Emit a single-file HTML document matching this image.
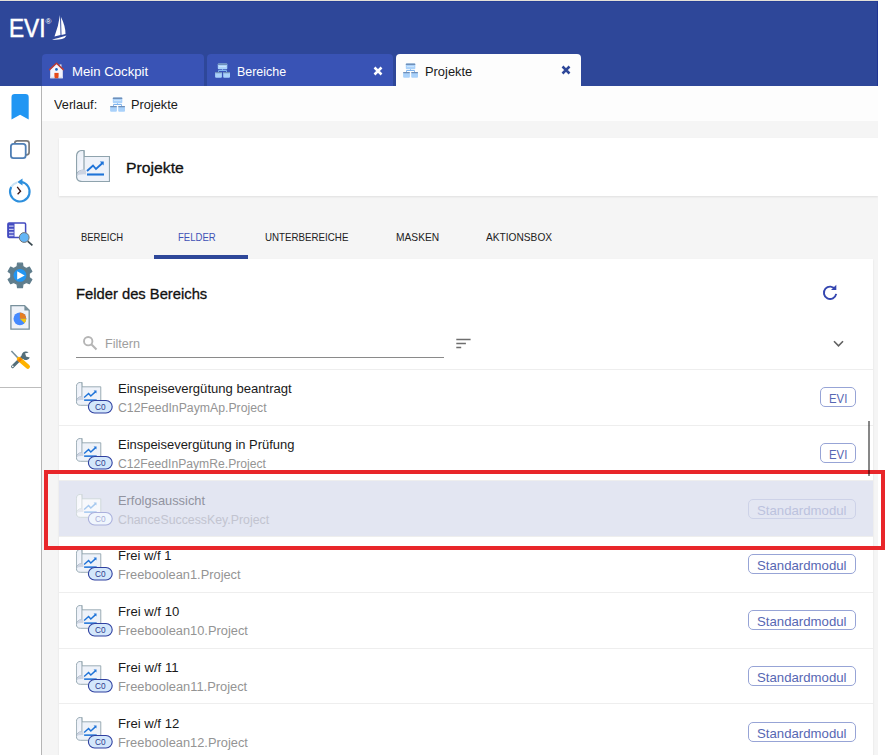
<!DOCTYPE html>
<html><head><meta charset="utf-8">
<style>
*{box-sizing:border-box;margin:0;padding:0}
html,body{width:886px;height:755px;overflow:hidden;background:#fff;font-family:"Liberation Sans",sans-serif;}
.abs{position:absolute}
.fo{transform-origin:0 50%}
#app{position:absolute;left:0;top:0;width:878px;height:755px;background:#f5f5f5;overflow:hidden}
#topline{position:absolute;left:0;top:0;width:878px;height:1px;background:#e3e0d8}
#hdr{position:absolute;left:0;top:1px;width:878px;height:85px;background:#2e4799;border-right:1px solid #1f3593;border-top:1px solid #263f95}
.tab{position:absolute;top:54px;height:32px;background:#3953b5;border-radius:4px 4px 0 0;color:#fff;font-size:13.4px}
.tab span.t{position:absolute;top:10px;white-space:nowrap;transform-origin:0 50%}
#side{position:absolute;left:0;top:86px;width:42px;height:669px;background:#fff;border-right:1px solid #b5b5b5}
#crumb{position:absolute;left:42px;top:86px;width:836px;height:35px;background:#fdfdfd}
.card{position:absolute;background:#fff;box-shadow:0 1px 2px rgba(0,0,0,.09)}
.stab{position:absolute;top:231px;font-size:11px;color:#212121;white-space:nowrap;transform-origin:0 50%}
.row{position:absolute;left:59px;width:814px;height:56px}
.sep{position:absolute;left:59px;width:814px;height:1px;background:#eeeeee}
.row .ti{position:absolute;left:59px;top:12px;font-size:13px;color:#1a1a1a;white-space:nowrap;transform-origin:0 50%}
.row .su{position:absolute;left:59px;top:32px;font-size:12.5px;color:#949494;white-space:nowrap;transform-origin:0 50%}
.row .ic{position:absolute;left:17px;top:13px;width:38px;height:32px}
.chip{position:absolute;right:17px;top:18px;height:20px;border:1px solid #97a4d6;border-radius:5px;color:#5767b3;font-size:13px;white-space:nowrap}
.chip .ct{position:absolute;top:3px;left:0;transform-origin:0 50%}
.row.sel .ti{color:#9193a0}
.row.sel .su{color:#c2c4d0}
.row.sel .chip{border-color:#cdd2e8;color:#bcc2de}
.row.sel .ic{--sf:#f7f8fc;--ss:#cdd6d8;--sr:#fafbfe;--sd:#e6e9f0;--sc:#a6c8ef}
</style></head><body>
<div id="app">
 <div id="topline"></div>
 <div id="hdr"></div>
 <!-- logo -->
 <div class="abs fo" style="left:9.06px;transform:scaleX(0.8704);top:13px;color:#fff;font-size:26px;white-space:nowrap;-webkit-text-stroke:.55px #fff">EVI</div>
 <div class="abs" style="left:45.5px;top:17px;color:#fff;font-size:8px;line-height:10px">®</div>
 <svg class="abs" style="left:51px;top:14px" width="17" height="28" viewBox="0 0 17 28">
  <path d="M9 1 L9.5 21 L3.5 22.5 Q7.5 12 9 1Z" fill="#fff"/>
  <path d="M10 3 Q14.5 12 14.5 20 L10.5 21Z" fill="#fff"/>
  <path d="M1 25.5 Q8 24 15.5 21.5 Q14 24.5 11 25 Q6 26.2 1 25.5Z" fill="#fff"/>
 </svg>

 <!-- tabs -->
 <div class="tab" style="left:42px;width:162px"><span class="t" style="left:30.42px;transform:scaleX(0.9847);">Mein Cockpit</span>
  <svg class="abs" style="left:7px;top:8px" width="15" height="17" viewBox="0 0 15 17">
   <path d="M1.2 7.4 L7.5 1.6 L13.8 7.4 V16.2 H1.2Z" fill="#f4f4fb"/>
   <path d="M10.6 2.4h1.9v3.4h-1.9z" fill="#dfe1ee"/>
   <path d="M0.6 7.6 L7.5 1.3 L14.4 7.6" fill="none" stroke="#b83b37" stroke-width="1.5" stroke-linejoin="round" stroke-linecap="round"/>
   <rect x="5.4" y="10.9" width="4.2" height="5.3" fill="#e64a19"/>
   <path d="M1.2 14.8h4.2v1.4h-4.2z M9.6 14.8h4.2v1.4h-4.2z" fill="#dcdff0"/>
   <circle cx="7.45" cy="7.4" r="1.35" fill="#1565c0"/>
  </svg></div>
 <div class="tab" style="left:207px;width:186px"><span class="t" style="left:30.47px;transform:scaleX(0.9280);">Bereiche</span>
  <svg class="abs" style="left:7px;top:9px" width="17" height="15" viewBox="0 0 17 15"><use href="#site"/></svg>
  <svg class="abs" style="left:166px;top:11.5px" width="10" height="10" viewBox="0 0 10 10"><path d="M1.5 1.5 L8.5 8.5 M8.5 1.5 L1.5 8.5" stroke="#fff" stroke-width="2.5"/></svg></div>
 <div class="tab" style="left:396px;width:185px;background:#fdfdfd;color:#1a1a1a"><span class="t" style="left:29.24px;transform:scaleX(0.9607);">Projekte</span>
  <svg class="abs" style="left:6.4px;top:9px" width="17" height="15" viewBox="0 0 17 15"><use href="#site"/></svg>
  <svg class="abs" style="left:165.4px;top:11.4px" width="10" height="10" viewBox="0 0 10 10"><path d="M1.5 1.5 L8.5 8.5 M8.5 1.5 L1.5 8.5" stroke="#2e4799" stroke-width="2.5"/></svg></div>

 <svg width="0" height="0" style="position:absolute"><defs>
  <g id="site">
   <path d="M8.5 6.2v1.3 M4.5 8.9v-1.4h8v1.4" fill="none" stroke="#7fb4ee" stroke-width="1"/>
   <rect x="3.8" y="0.45" width="9.5" height="5.75" rx="1" fill="#a9d1fa"/>
   <rect x="3.8" y="0.45" width="9.5" height="1.6" rx=".6" fill="#6f8fb8"/>
   <rect x="5" y="3" width="7.1" height="1.1" fill="#c9e3fc"/>
   <rect x="1.1" y="8.9" width="6.8" height="5.9" rx="1" fill="#a9d1fa"/>
   <rect x="1.1" y="8.9" width="6.8" height="1.3" rx=".6" fill="#6f8fb8"/>
   <rect x="9.2" y="8.9" width="6.8" height="5.9" rx="1" fill="#a9d1fa"/>
   <rect x="9.2" y="8.9" width="6.8" height="1.3" rx=".6" fill="#6f8fb8"/>
  </g>
  <g id="scroll">
   <path d="M8 6.5 H33.5 V31.5 H6 Q0.5 31.5 0.5 26 V6.5 Q0.5 0.5 6.5 0.5 H8 Z" style="fill:var(--sf,#eef2f9);stroke:var(--ss,#8fa3ad)" stroke-width="1.2" stroke-linejoin="round"/>
   <path d="M8 0.5 V20 Q1 20 0.6 26" style="fill:var(--sr,#f4f6fd);stroke:var(--ss,#8fa3ad)" stroke-width="1.2"/>
   <path d="M8 19.6 Q1.2 19.8 0.8 26 Q2.5 24 10 24.4 V21 L8.6 19.6Z" style="fill:var(--sd,#cdd4e2)"/>
   <path d="M11 21 L17 15.5 L20 19 L26.5 13" fill="none" style="stroke:var(--sc,#1e73d8)" stroke-width="1.9"/>
   <path d="M23.8 11.6 L27.8 11.4 L27.6 15.4Z" style="fill:var(--sc,#1e73d8)"/>
   <path d="M11 24.5 H28" style="stroke:var(--sc,#1e73d8)" stroke-width="2.1"/>
  </g>
 </defs></svg>

 <!-- sidebar -->
 <div id="side"></div>
 <div class="abs" style="left:0;top:387px;width:41px;height:1px;background:#bdbdbd"></div>
<svg class="abs" style="left:0;top:86px" width="41" height="310" viewBox="0 86 41 310">
  <!-- bookmark -->
  <path d="M11.5 97.2 Q11.5 94 14.7 94 H25.5 Q28.7 94 28.7 97.2 V119.6 L20.1 114.8 L11.5 119.6Z" fill="#2196f3"/>
  <!-- copy -->
  <rect x="14.7" y="140.8" width="14.4" height="14" rx="2.6" fill="none" stroke="#7a7a7a" stroke-width="1.7"/>
  <rect x="10.9" y="143.9" width="14.8" height="14.2" rx="2.6" fill="#fff" stroke="#4f7fb5" stroke-width="1.8"/>
  <!-- history -->
  <path d="M21.5 182 A9.8 9.8 0 1 1 11.2 187" fill="none" stroke="#2d8fdd" stroke-width="2.1"/>
  <path d="M11.2 187 A9.8 9.8 0 0 1 17 182.4" fill="none" stroke="#2d8fdd" stroke-width="2.1" opacity=".25"/>
  <path d="M22.5 178.6 L17.3 182 L22.5 185.4Z" fill="#2d8fdd"/>
  <path d="M17.2 186.8 L20.6 191.3 L17.6 194.3" fill="none" stroke="#3a1414" stroke-width="1.3"/>
  <!-- table search -->
  <rect x="7.9" y="223.1" width="17.7" height="14.4" rx="1.2" fill="#fff" stroke="#434bc0" stroke-width="1.5"/>
  <rect x="7.9" y="223.1" width="6.6" height="14.4" fill="#434bc0"/>
  <path d="M9 226.1h4.6 M9 229.3h4.6 M9 232.5h4.6 M9 235.5h4.6" stroke="#c5c9f0" stroke-width="1.3"/>
  <path d="M27.6 241.2 L32.4 245.4" stroke="#37474f" stroke-width="1.7"/>
  <circle cx="24.2" cy="237.5" r="4.9" fill="#64b5f6" stroke="#757575" stroke-width="1"/>
  <!-- gear -->
  <path d="M17.13 266.45 L17.52 263.15 L22.48 263.15 L22.87 266.45 L26.32 268.44 L29.37 267.12 L31.85 271.43 L29.19 273.41 L29.19 277.39 L31.85 279.37 L29.37 283.68 L26.32 282.36 L22.87 284.35 L22.48 287.65 L17.52 287.65 L17.13 284.35 L13.68 282.36 L10.63 283.68 L8.15 279.37 L10.81 277.39 L10.81 273.41 L8.15 271.43 L10.63 267.12 L13.68 268.44Z" fill="#5f7d8c" stroke="#5f7d8c" stroke-width="1.2" stroke-linejoin="round"/>
  <circle cx="20" cy="275.4" r="6.4" fill="#2196f3"/>
  <path d="M17.2 271.3 L24.7 275.4 L17.2 279.5Z" fill="#fff"/>
  <!-- document pie -->
  <path d="M10.9 305.6 H24.6 L29.2 310.2 V329.2 H10.9Z" fill="#eef2f8" stroke="#78909c" stroke-width="1.3"/>
  <path d="M24.4 305.4 V310.4 H29.4Z" fill="#78909c"/>
  <circle cx="19.9" cy="318.8" r="6.4" fill="#448aff"/>
  <path d="M19.9 318.8 V312.4 A6.4 6.4 0 0 1 26.3 318.8Z" fill="#e67e22"/>
  <path d="M19.9 318.8 H26.3 A6.4 6.4 0 0 1 24.6 323.2Z" fill="#f1c40f"/>
  <!-- tools -->
  <path d="M11.4 351 L19.2 359.2" stroke="#78909c" stroke-width="1.6"/>
  <path d="M12.6 366.6 L24 355.4" stroke="#546e7a" stroke-width="3" stroke-linecap="round"/>
  <path d="M28.6 352.4 A4.3 4.3 0 1 0 29.8 357.6 L26 356.6 L25 353.6Z" fill="#546e7a"/>
  <circle cx="12.8" cy="366.4" r=".8" fill="#fff"/>
  <path d="M19 359 L27.8 366.6" stroke="#ffb300" stroke-width="4.4" stroke-linecap="round"/>
  <path d="M17.6 360.4 L20.4 357.6 L22.2 359.4 L19.4 362.2Z" fill="#f57c00"/>
</svg>

 <!-- breadcrumb -->
 <div id="crumb"></div>
 <div class="abs fo" style="left:54.40px;transform:scaleX(0.9799);top:96.8px;font-size:13px;color:#1a1a1a;white-space:nowrap">Verlauf:</div>
 <svg class="abs" style="left:109.2px;top:96.5px" width="17" height="15" viewBox="0 0 17 15"><use href="#site"/></svg>
 <div class="abs fo" style="left:131.42px;transform:scaleX(0.9815);top:96.8px;font-size:13px;color:#1a1a1a;white-space:nowrap">Projekte</div>

 <!-- title card -->
 <div class="card" style="left:59px;top:138px;width:819px;height:58px"></div>
 <svg class="abs" style="left:76px;top:150px" width="34" height="32" viewBox="0 0 34 32"><use href="#scroll"/></svg>
 <div class="abs" id="ptitle" style="left:125.58px;transform:scaleX(1.0174);top:159.4px;transform-origin:0 50%;font-size:15.5px;color:#111;white-space:nowrap;-webkit-text-stroke:.3px #111">Projekte</div>

 <!-- section tabs -->
 <div class="stab" style="left:81.10px;transform:scaleX(0.8600);">BEREICH</div>
 <div class="stab" style="left:178.00px;transform:scaleX(0.8676);color:#3f51b5">FELDER</div>
 <div class="stab" style="left:265.00px;transform:scaleX(0.8861);">UNTERBEREICHE</div>
 <div class="stab" style="left:396.30px;transform:scaleX(0.9310);">MASKEN</div>
 <div class="stab" style="left:486.10px;transform:scaleX(0.9241);">AKTIONSBOX</div>
 <div class="abs" style="left:154px;top:255px;width:94px;height:4px;background:#2e4799"></div>

 <!-- list card -->
 <div class="card" style="left:59px;top:259px;width:814px;height:500px"></div>
 <div class="abs" id="ltitle" style="left:75.95px;transform:scaleX(0.9519);top:284.8px;transform-origin:0 50%;font-size:15.5px;color:#111;white-space:nowrap;-webkit-text-stroke:.3px #111">Felder des Bereichs</div>
 <svg class="abs" style="left:822px;top:284px" width="16" height="17" viewBox="0 0 16 17"><path d="M13.3 5.4 A6.2 6.2 0 1 0 14.2 9.9" fill="none" stroke="#3446b0" stroke-width="1.9"/><path d="M9 6 L14.3 6 L14.3 0.7Z" fill="#3446b0"/></svg>
 <svg class="abs" style="left:82px;top:335px" width="16" height="16" viewBox="0 0 16 16"><circle cx="6.2" cy="6.2" r="4.2" fill="none" stroke="#b5b5b5" stroke-width="1.9"/><path d="M9.3 9.3 L14.5 14.5" stroke="#b5b5b5" stroke-width="2"/></svg>
 <div class="abs fo" style="left:105.33px;transform:scaleX(0.9717);top:336px;font-size:13px;color:#9e9e9e;white-space:nowrap">Filtern</div>
 <div class="abs" style="left:76px;top:357px;width:368px;height:1px;background:#8a8a8a"></div>
 <svg class="abs" style="left:455px;top:337px" width="17" height="13" viewBox="0 0 17 13"><path d="M1.3 2.45h14.3 M1.3 6.45h9.6 M1.3 10.5h4.9" stroke="#6e6e6e" stroke-width="1.35"/></svg>
 <svg class="abs" style="left:833px;top:340px" width="11" height="8" viewBox="0 0 11 8"><path d="M1 1.2 L5.5 5.8 L10 1.2" fill="none" stroke="#616161" stroke-width="1.6"/></svg>

 <div class="abs" style="left:59px;top:481px;width:814px;height:55px;background:#e3e6f2"></div>
<div class="sep" style="top:369px"></div>
<div class="sep" style="top:425px"></div>
<div class="sep" style="top:480px"></div>
<div class="sep" style="top:536px"></div>
<div class="sep" style="top:592px"></div>
<div class="sep" style="top:648px"></div>
<div class="sep" style="top:703px"></div>
<div class="sep" style="top:759px"></div>
<div class="row" style="top:369.0px">
  <svg class="ic" viewBox="0 0 38 32"><g transform="scale(.74)"><use href="#scroll"/></g>
   <rect x="12.4" y="18.5" width="23.8" height="12.5" rx="6.25" fill="#d3e7fb" stroke="#2f40a0" stroke-width="1.1"/>
   <text x="19" y="28.2" font-size="9.5" fill="#2c3a8c" textLength="10.6" lengthAdjust="spacingAndGlyphs" font-family="Liberation Sans, sans-serif">C0</text></svg>
  <div class="ti" style="left:58.59px;transform:scaleX(1.0057);">Einspeisevergütung beantragt</div><div class="su" style="left:59.20px;transform:scaleX(0.9810);">C12FeedInPaymAp.Project</div>
  <div class="chip" style="width:36px"><span class="ct" style="left:7.93px;transform:scaleX(0.8738);">EVI</span></div></div>
<div class="row" style="top:425.0px">
  <svg class="ic" viewBox="0 0 38 32"><g transform="scale(.74)"><use href="#scroll"/></g>
   <rect x="12.4" y="18.5" width="23.8" height="12.5" rx="6.25" fill="#d3e7fb" stroke="#2f40a0" stroke-width="1.1"/>
   <text x="19" y="28.2" font-size="9.5" fill="#2c3a8c" textLength="10.6" lengthAdjust="spacingAndGlyphs" font-family="Liberation Sans, sans-serif">C0</text></svg>
  <div class="ti" style="left:58.60px;transform:scaleX(0.9964);">Einspeisevergütung in Prüfung</div><div class="su" style="left:59.20px;transform:scaleX(0.9726);">C12FeedInPaymRe.Project</div>
  <div class="chip" style="width:36px"><span class="ct" style="left:7.93px;transform:scaleX(0.8738);">EVI</span></div></div>
<div class="row sel" style="top:481.0px">
  <svg class="ic" viewBox="0 0 38 32"><g transform="scale(.74)"><use href="#scroll"/></g>
   <rect x="12.4" y="18.5" width="23.8" height="12.5" rx="6.25" fill="#f0f6fd" stroke="#aab0dc" stroke-width="1.1"/>
   <text x="19" y="28.2" font-size="9.5" fill="#a9aed8" textLength="10.6" lengthAdjust="spacingAndGlyphs" font-family="Liberation Sans, sans-serif">C0</text></svg>
  <div class="ti" style="left:58.61px;transform:scaleX(0.9870);">Erfolgsaussicht</div><div class="su" style="left:59.20px;transform:scaleX(0.9854);">ChanceSuccessKey.Project</div>
  <div class="chip" style="width:108px"><span class="ct" style="left:8.00px;transform:scaleX(1.0149);">Standardmodul</span></div></div>
<div class="row" style="top:536.0px">
  <svg class="ic" viewBox="0 0 38 32"><g transform="scale(.74)"><use href="#scroll"/></g>
   <rect x="12.4" y="18.5" width="23.8" height="12.5" rx="6.25" fill="#d3e7fb" stroke="#2f40a0" stroke-width="1.1"/>
   <text x="19" y="28.2" font-size="9.5" fill="#2c3a8c" textLength="10.6" lengthAdjust="spacingAndGlyphs" font-family="Liberation Sans, sans-serif">C0</text></svg>
  <div class="ti" style="left:58.60px;transform:scaleX(0.9995);">Frei w/f 1</div><div class="su" style="left:59.27px;transform:scaleX(1.0257);">Freeboolean1.Project</div>
  <div class="chip" style="width:108px"><span class="ct" style="left:8.00px;transform:scaleX(1.0149);">Standardmodul</span></div></div>
<div class="row" style="top:592.0px">
  <svg class="ic" viewBox="0 0 38 32"><g transform="scale(.74)"><use href="#scroll"/></g>
   <rect x="12.4" y="18.5" width="23.8" height="12.5" rx="6.25" fill="#d3e7fb" stroke="#2f40a0" stroke-width="1.1"/>
   <text x="19" y="28.2" font-size="9.5" fill="#2c3a8c" textLength="10.6" lengthAdjust="spacingAndGlyphs" font-family="Liberation Sans, sans-serif">C0</text></svg>
  <div class="ti" style="left:58.59px;transform:scaleX(1.0092);">Frei w/f 10</div><div class="su" style="left:59.27px;transform:scaleX(1.0270);">Freeboolean10.Project</div>
  <div class="chip" style="width:108px"><span class="ct" style="left:8.00px;transform:scaleX(1.0149);">Standardmodul</span></div></div>
<div class="row" style="top:648.0px">
  <svg class="ic" viewBox="0 0 38 32"><g transform="scale(.74)"><use href="#scroll"/></g>
   <rect x="12.4" y="18.5" width="23.8" height="12.5" rx="6.25" fill="#d3e7fb" stroke="#2f40a0" stroke-width="1.1"/>
   <text x="19" y="28.2" font-size="9.5" fill="#2c3a8c" textLength="10.6" lengthAdjust="spacingAndGlyphs" font-family="Liberation Sans, sans-serif">C0</text></svg>
  <div class="ti" style="left:58.58px;transform:scaleX(1.0156);">Frei w/f 11</div><div class="su" style="left:59.27px;transform:scaleX(1.0290);">Freeboolean11.Project</div>
  <div class="chip" style="width:108px"><span class="ct" style="left:8.00px;transform:scaleX(1.0149);">Standardmodul</span></div></div>
<div class="row" style="top:704.0px">
  <svg class="ic" viewBox="0 0 38 32"><g transform="scale(.74)"><use href="#scroll"/></g>
   <rect x="12.4" y="18.5" width="23.8" height="12.5" rx="6.25" fill="#d3e7fb" stroke="#2f40a0" stroke-width="1.1"/>
   <text x="19" y="28.2" font-size="9.5" fill="#2c3a8c" textLength="10.6" lengthAdjust="spacingAndGlyphs" font-family="Liberation Sans, sans-serif">C0</text></svg>
  <div class="ti" style="left:58.59px;transform:scaleX(1.0092);">Frei w/f 12</div><div class="su" style="left:59.27px;transform:scaleX(1.0270);">Freeboolean12.Project</div>
  <div class="chip" style="width:108px"><span class="ct" style="left:8.00px;transform:scaleX(1.0149);">Standardmodul</span></div></div>
</div>
<!-- red highlight -->
<div class="abs" style="left:44px;top:470px;width:841px;height:80px;border:4px solid #e8262a"></div>
<div class="abs" style="left:868px;top:421px;width:2px;height:55px;background:rgba(0,0,0,.47)"></div>
</body></html>
